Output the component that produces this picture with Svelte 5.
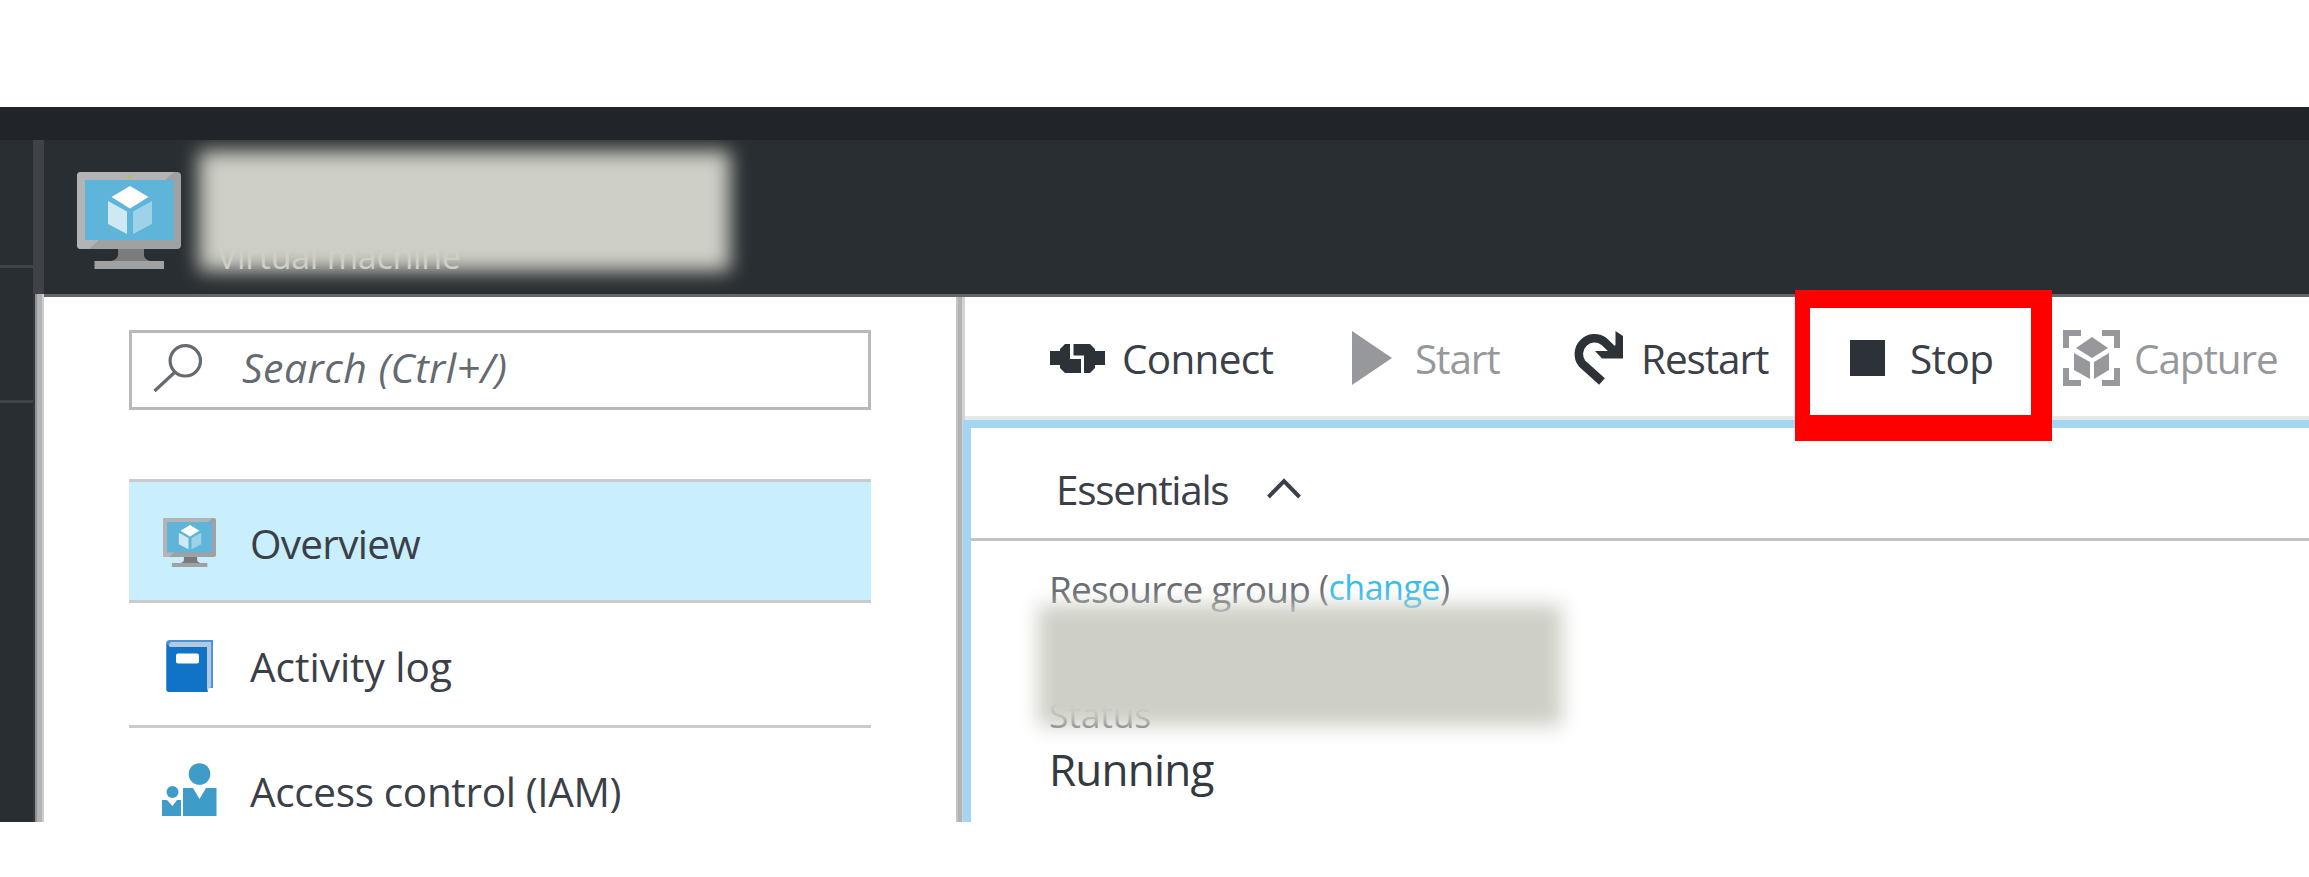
<script>
  const menu = [
    { icon: 'vm', label: 'Overview', spacing: -0.7, active: true },
    { icon: 'log', label: 'Activity log', spacing: 0 },
    { icon: 'people', label: 'Access control (IAM)', spacing: -0.35 }
  ];
</script>

{#snippet monitor(cls)}
  <svg class={cls} viewBox="0 0 104 97" preserveAspectRatio="none" aria-hidden="true">
    <rect width="104" height="77" rx="4" fill="#a0a1a2" />
    <path d="M4 0H97L12 77H4Q0 77 0 73V4Q0 0 4 0Z" fill="#b3b4b5" />
    <rect x="8" y="8" width="88.500" height="60" fill="#5eb4d9" />
    <rect x="50.500" y="3.500" width="3" height="2.500" fill="#b8c436" />
    <path d="M41 77H67V83Q67 87 73 89H34Q41 87 41 83Z" fill="#7a7b7c" />
    <rect x="17.500" y="89" width="69.500" height="8" fill="#9fa1a3" />
    <path d="M53 14L71.500 25L53 36.500L34.500 25Z" fill="#fff" />
    <path d="M31 29L50 39.500V62L31 52Z" fill="#cfe8f3" />
    <path d="M56 39.500L75 29V52L56 62Z" fill="#9ed2e8" />
  </svg>
{/snippet}

<div class="page">
  <div class="topbar"></div>
  <div class="portal">
    <aside class="rail">
      <div class="cell first"></div>
      <div class="cell second"></div>
    </aside>
    <div class="edge"><div class="edge-top"></div><div class="edge-bottom"></div></div>
    <section class="blade">
      <header>
        {@render monitor('vm-big')}
        <div class="subtitle">Virtual machine</div>
        <div class="redact one"></div>
      </header>
      <div class="body">
        <nav>
          <div class="search">
            <svg width="50" height="49" viewBox="0 0 50 49" aria-hidden="true">
              <circle cx="32.300" cy="16.800" r="15.200" />
              <path d="M21.500 28.500L1.500 47" />
            </svg>
            <span>Search (Ctrl+/)</span>
          </div>
          <ul>
            {#each menu as item}
              <li class:active={item.active}>
                <div class="icon">
                  {#if item.icon === 'vm'}
                    {@render monitor('vm-small')}
                  {:else if item.icon === 'log'}
                    <svg class="book" width="48" height="52" viewBox="0 0 48 52" aria-hidden="true">
                      <path d="M4 0H47V48H42V52H3Q0 52 0 49V4Q0 0 4 0Z" fill="#4a94d8" />
                      <path d="M5 2H45V47L41 50V7H3Q3 3 5 2Z" fill="#b5c9de" />
                      <path d="M1 4L4 7H41V52H3Q1 52 1 49Z" fill="#1173c6" />
                      <rect x="10" y="13.500" width="23" height="10" rx="2" fill="#fff" />
                    </svg>
                  {:else}
                    <svg width="55" height="53" viewBox="0 0 55 53" fill="#3f9bc8" aria-hidden="true">
                      <circle cx="37.500" cy="11" r="10.800" />
                      <path d="M21 25H31L37.500 36L44 25H54.500V53H21Z" />
                      <circle cx="10.500" cy="29" r="6" />
                      <path d="M0 37H5L10.500 43L15 37H19V53H0Z" />
                    </svg>
                  {/if}
                </div>
                <span style="letter-spacing: {item.spacing}px">{item.label}</span>
              </li>
            {/each}
          </ul>
        </nav>
        <div class="divider"></div>
        <main>
          <div class="toolbar">
            <div class="tool connect">
              <svg width="55" height="29" viewBox="0 0 55 29" aria-hidden="true">
                <path d="M0 7H10V5L15 0H20V15H31V29H15L10 24V21H0Z" />
                <path d="M23.500 0H40L45 5V7H55V21H45V24L40 29H34V11.500H23.500Z" />
              </svg>
              <span>Connect</span>
            </div>
            <div class="tool start off">
              <svg width="40" height="54" viewBox="0 0 40 54" aria-hidden="true"><path d="M0 0L40 27L0 54Z" /></svg>
              <span>Start</span>
            </div>
            <div class="tool restart">
              <svg width="50" height="54" viewBox="0 0 50 54" aria-hidden="true">
                <path d="M29 50.500L9 32.500A15.700 15.700 0 0 1 31 10.500L42 21" fill="none" stroke="#2d3239" stroke-width="8.500" />
                <path d="M42.500 0L50 5V27.500H29L22 20H36L42.500 14Z" />
              </svg>
              <span>Restart</span>
            </div>
            <div class="tool stop">
              <svg width="35" height="36" viewBox="0 0 35 36" aria-hidden="true"><path d="M0 0H35V36H0Z" /></svg>
              <span>Stop</span>
              <div class="highlight"></div>
            </div>
            <div class="tool capture off">
              <svg width="57" height="56" viewBox="0 0 57 56" aria-hidden="true">
                <path d="M0 0H18V6H6V18H0ZM39 0H57V18H51V6H39ZM0 38H6V50H18V56H0ZM51 38H57V56H39V50H51Z" />
                <path d="M29 7L45 18L29 28L13 18ZM11 23L27 32V49L11 40ZM46 23L31 32V49L46 40Z" />
              </svg>
              <span>Capture</span>
            </div>
          </div>
          <div class="panel">
            <div class="essentials">
              <span>Essentials</span>
              <svg width="34" height="21" viewBox="0 0 34 21" aria-hidden="true"><path d="M1.500 19L17 3L32.500 19" /></svg>
            </div>
            <div class="details">
              <div class="group"><span class="name">Resource group</span><span class="change">(<a href="#change">change</a>)</span></div>
              <div class="status">Status</div>
              <div class="running">Running</div>
              <div class="redact two"></div>
            </div>
          </div>
        </main>
      </div>
    </section>
  </div>
</div>

<style>
  :global(body) { margin: 0; background: #fff; }
  * { box-sizing: border-box; }
  .page {
    width: 2309px; height: 877px; padding-top: 107px; overflow: hidden;
    font-family: "Open Sans", "Noto Sans", sans-serif;
    font-size: 40.5px; line-height: 56px; color: #3b4048; white-space: nowrap;
  }
  svg { display: block; flex: none; }
  .topbar { height: 33px; background: #212429; }
  .portal { display: flex; height: 682px; overflow: hidden; }
  .rail { width: 33px; background: #292e32; }
  .cell { border-bottom: 3px solid #3f4347; }
  .first { height: 128px; }
  .second { height: 135px; }
  .edge { width: 11px; }
  .edge-top { height: 154px; background: #3f4347; }
  .edge-bottom {
    height: 528px;
    background: linear-gradient(90deg, #33383c 2px, #909192 2px 4px, #b3b3b3 4px 9px, #cdcdcd 9px);
  }
  .blade { width: 2265px; }
  header {
    position: relative; display: flex; height: 157px; padding: 32px 0 0 33px;
    background: #292e32; border-bottom: 3px solid #63666b;
  }
  .vm-big { width: 104px; height: 97px; }
  .subtitle { margin: 59px 0 0 36px; font-size: 34px; line-height: 50px; letter-spacing: -0.3px; color: #c9ccc9; }
  .redact { position: absolute; background: #cecfc6; filter: blur(9.5px); }
  .one { left: 155px; top: 11px; width: 531px; height: 120px; }
  .body { display: flex; height: 525px; }
  nav { width: 912px; padding: 33px 0 0 85px; }
  .search {
    display: flex; width: 742px; height: 80px; padding: 11px 0 0 21px;
    border: 3px solid #b9b9b9; color: #656970; font-style: italic; font-size: 41px;
  }
  .search svg { fill: none; stroke: #656970; stroke-width: 3.2; }
  .search span { margin-left: 39px; margin-top: -5px; letter-spacing: 0.45px; }
  ul { width: 742px; margin: 69px 0 0; padding: 0; list-style: none; border-top: 3px solid #cbcbcb; }
  li { display: flex; align-items: center; height: 124.5px; border-bottom: 3px solid #cbcbcb; }
  li.active { height: 121px; background: #c9eefe; }
  li:last-child { border: 0; }
  li span { margin-top: 6px; }
  li.active span { margin-top: 5px; }
  li:last-child span { margin-top: 4px; }
  .book { margin-top: 4px; }
  .icon { display: flex; justify-content: center; width: 55px; margin: 0 33px 0 33px; }
  .vm-small { width: 53px; height: 49px; margin-top: 2px; }
  .divider { width: 9px; background: linear-gradient(90deg, #c4c4c4 2px, #b3b3b3 2px 6px, #d3d3d3 6px); }
  main { width: 1344px; }
  .toolbar {
    display: grid; grid-template-columns: 302px 221px 277px 213px 300px;
    height: 123px; padding: 1px 0 0 85px; border-bottom: 4px solid #e6e8e9;
  }
  .tool { position: relative; display: flex; align-items: center; height: 120px; color: #3b4048; fill: #2d3239; }
  .tool span { margin-top: 2px; }
  .off { color: #96989c; fill: #96989c; }
  .connect span { margin-left: 17px; letter-spacing: -0.7px; }
  .start span { margin-left: 23px; letter-spacing: -1.1px; }
  .restart span { margin-left: 18px; letter-spacing: -1.1px; }
  .stop span { margin-left: 25px; letter-spacing: -0.6px; }
  .capture span { margin-left: 14px; letter-spacing: -1.1px; }
  .highlight {
    position: absolute; left: -55px; top: -8px; width: 257px; height: 151px;
    border: solid #f00; border-width: 18px 21px 26px 15px;
  }
  .panel { height: 402px; margin-left: -2px; border: solid #a3d6f2; border-width: 8px 0 0 8px; }
  .essentials { display: flex; height: 113px; padding: 34px 0 0 85px; border-bottom: 3px solid #c2c2c2; }
  .essentials span { width: 211px; letter-spacing: -1.3px; }
  .essentials svg { margin-top: 16px; fill: none; stroke: #3b4048; stroke-width: 4; }
  .details { position: relative; padding: 21px 0 0 78px; color: #686c72; }
  .group { display: flex; height: 50px; line-height: 54px; font-size: 37px; letter-spacing: -0.8px; }
  .name { width: 270px; }
  .change { font-size: 34px; letter-spacing: -0.5px; margin-top: -2px; }
  a { color: #36bdef; text-decoration: none; }
  .status { margin-top: 78px; font-size: 35.5px; line-height: 48px; letter-spacing: -0.2px; }
  .running { margin-top: 1px; color: #343a41; font-size: 44px; line-height: 60px; letter-spacing: -0.8px; }
  .two { left: 67px; top: 64px; width: 524px; height: 121px; }
</style>
